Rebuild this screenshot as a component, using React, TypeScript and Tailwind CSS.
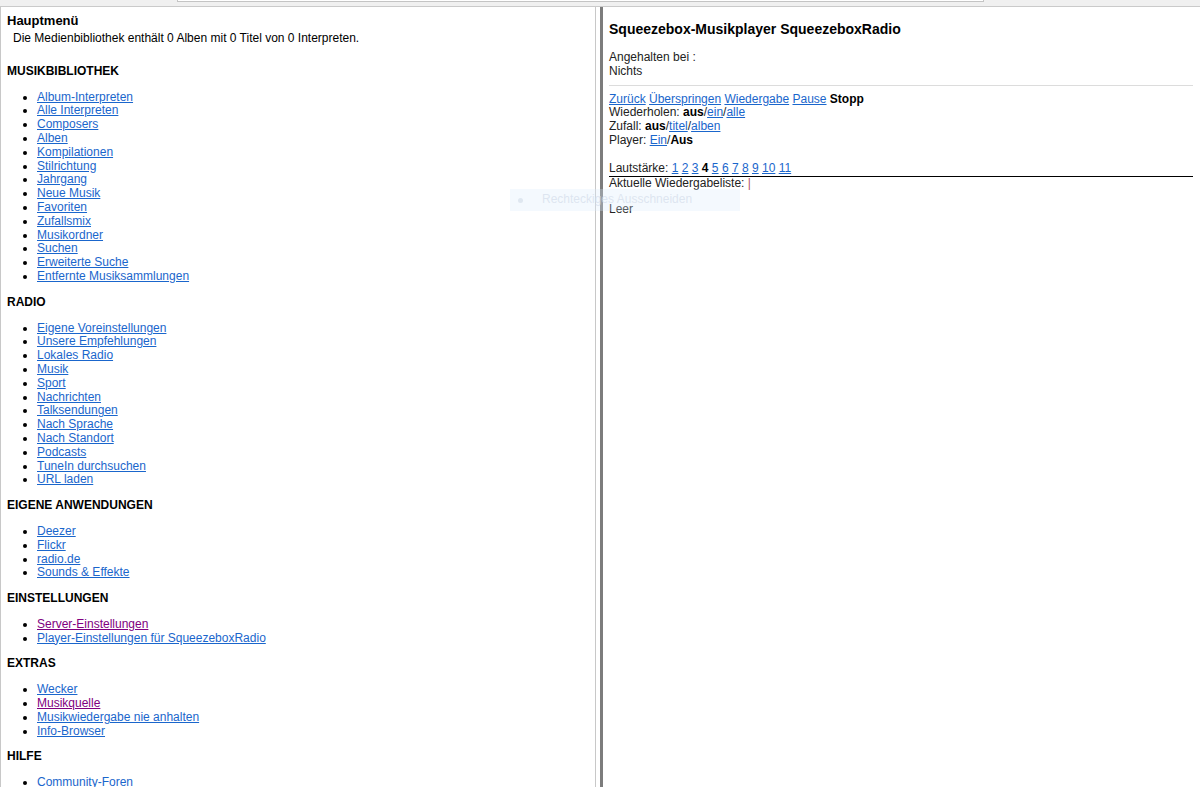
import React from "react";

type MenuLink = { label: string; visited?: boolean };
type MenuSection = { title: string; links: MenuLink[] };

const sections: MenuSection[] = [
  {
    title: "MUSIKBIBLIOTHEK",
    links: [
      { label: "Album-Interpreten" },
      { label: "Alle Interpreten" },
      { label: "Composers" },
      { label: "Alben" },
      { label: "Kompilationen" },
      { label: "Stilrichtung" },
      { label: "Jahrgang" },
      { label: "Neue Musik" },
      { label: "Favoriten" },
      { label: "Zufallsmix" },
      { label: "Musikordner" },
      { label: "Suchen" },
      { label: "Erweiterte Suche" },
      { label: "Entfernte Musiksammlungen" },
    ],
  },
  {
    title: "RADIO",
    links: [
      { label: "Eigene Voreinstellungen" },
      { label: "Unsere Empfehlungen" },
      { label: "Lokales Radio" },
      { label: "Musik" },
      { label: "Sport" },
      { label: "Nachrichten" },
      { label: "Talksendungen" },
      { label: "Nach Sprache" },
      { label: "Nach Standort" },
      { label: "Podcasts" },
      { label: "TuneIn durchsuchen" },
      { label: "URL laden" },
    ],
  },
  {
    title: "EIGENE ANWENDUNGEN",
    links: [
      { label: "Deezer" },
      { label: "Flickr" },
      { label: "radio.de" },
      { label: "Sounds & Effekte" },
    ],
  },
  {
    title: "EINSTELLUNGEN",
    links: [
      { label: "Server-Einstellungen", visited: true },
      { label: "Player-Einstellungen für SqueezeboxRadio" },
    ],
  },
  {
    title: "EXTRAS",
    links: [
      { label: "Wecker" },
      { label: "Musikquelle", visited: true },
      { label: "Musikwiedergabe nie anhalten" },
      { label: "Info-Browser" },
    ],
  },
  {
    title: "HILFE",
    links: [{ label: "Community-Foren" }],
  },
];

function Link({ children, visited }: { children: React.ReactNode; visited?: boolean }) {
  return (
    <a
      href="#"
      className={visited ? "text-[#800080] underline" : "text-[#1a66cc] underline"}
    >
      {children}
    </a>
  );
}

function MainMenu() {
  return (
    <div className="w-[596px] shrink-0 border-l border-r border-[#c8c8c8] pl-[6px] pt-[6px] text-black">
      <h1 className="text-[13px] font-bold leading-[15px]">Hauptmenü</h1>
      <p className="mt-[4px] pl-[6px]">
        Die Medienbibliothek enthält 0 Alben mit 0 Titel von 0 Interpreten.
      </p>
      <div className="mt-[19px]">
        {sections.map((s) => (
          <div key={s.title}>
            <h2 className="font-bold">{s.title}</h2>
            <ul className="my-3 list-disc pl-[30px]">
              {s.links.map((l) => (
                <li key={l.label}>
                  <Link visited={l.visited}>{l.label}</Link>
                </li>
              ))}
            </ul>
          </div>
        ))}
      </div>
    </div>
  );
}

function PlayerStatus() {
  const volumes = [1, 2, 3, 4, 5, 6, 7, 8, 9, 10, 11];
  return (
    <div className="flex-1 pl-[6px] pr-[7px] pt-[14px] text-[#222]">
      <h1 className="text-[14px] font-bold leading-[16px] text-black">
        Squeezebox-Musikplayer SqueezeboxRadio
      </h1>
      <div className="mt-[14px]">
        <div>Angehalten bei :</div>
        <div>Nichts</div>
      </div>
      <div className="mt-[6px] mb-[7px] h-px bg-[#dcdcdc]" />
      <div>
        <Link>Zurück</Link> <Link>Überspringen</Link> <Link>Wiedergabe</Link>{" "}
        <Link>Pause</Link> <b className="text-black">Stopp</b>
      </div>
      <div>
        Wiederholen: <b className="text-black">aus</b>/<Link>ein</Link>/<Link>alle</Link>
      </div>
      <div>
        Zufall: <b className="text-black">aus</b>/<Link>titel</Link>/<Link>alben</Link>
      </div>
      <div>
        Player: <Link>Ein</Link>/<b className="text-black">Aus</b>
      </div>
      <div className="h-[13.8px]" />
      <div className="border-b border-black pb-[1px]">
        Lautstärke:{" "}
        {volumes.map((v) => (
          <React.Fragment key={v}>
            {v === 4 ? <b className="text-black">4</b> : <Link>{v}</Link>}{" "}
          </React.Fragment>
        ))}
      </div>
      <div>
        Aktuelle Wiedergabeliste: <span className="text-[#b0506e]">|</span>
      </div>
      <div className="mt-[12px]">Leer</div>
    </div>
  );
}

export default function App() {
  return (
    <div className="relative h-[787px] w-[1200px] overflow-hidden bg-white font-['Liberation_Sans',Arial,sans-serif] text-[12px] leading-[13.8px]">
      {/* address strip at the top, the field's lower edge peeking out */}
      <div className="h-[7px] border-b border-[#cacaca] bg-[#f0f0f0]">
        <div className="ml-[177px] h-[2px] w-[807px] border-x border-b border-[#c4c4c4] bg-white" />
      </div>

      <div className="flex h-[780px]">
        <MainMenu />
        <div className="w-[4px] shrink-0 bg-white" />
        <div className="w-[3px] shrink-0 bg-[#7c7c7c]" />
        <PlayerStatus />
      </div>

      {/* faint snipping hint floating over the frames */}
      <div className="pointer-events-none absolute left-[510px] top-[189px] flex h-[22px] w-[230px] items-center bg-[#dcebfc]/30">
        <span className="ml-[8px] h-[5px] w-[5px] rounded-full bg-[#d6dfea]/70" />
        <span className="ml-[19px] text-[12px] text-[#d3dcea]/70">Rechteckiges Ausschneiden</span>
      </div>
    </div>
  );
}
